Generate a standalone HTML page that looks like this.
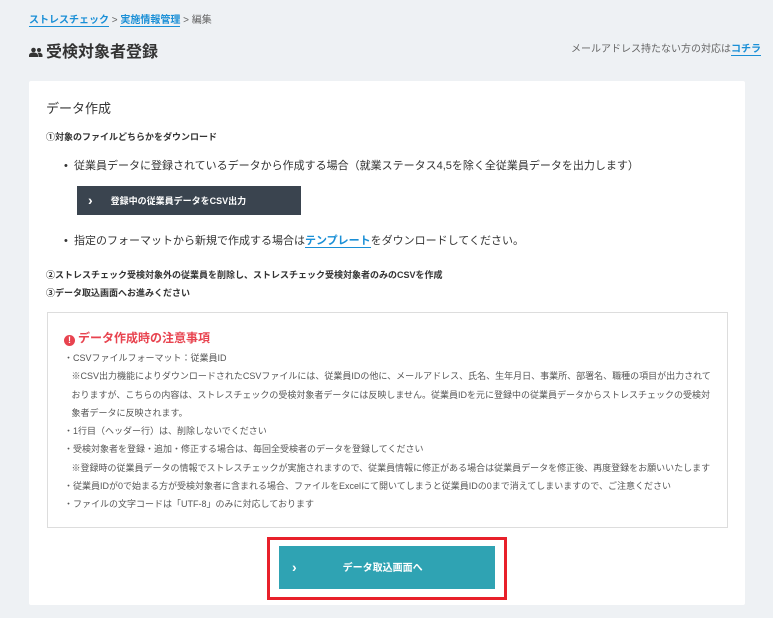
<!DOCTYPE html><html><head><meta charset="utf-8"><style>
body{margin:0;width:773px;height:618px;background:#eef1f4;font-family:"Liberation Sans","Noto Sans CJK JP",sans-serif;position:relative;overflow:hidden;color:#333}
.a{position:absolute;white-space:nowrap}
.lk{color:#1a8fd6;border-bottom:1.5px solid #1a8fd6;font-weight:bold}
.ch{font-size:14px;font-weight:bold;vertical-align:-1px}
</style></head><body>
<div class="a" style="left:29px;top:11px;font-size:10px;color:#666"><span class="lk">ストレスチェック</span> &gt; <span class="lk">実施情報管理</span> &gt; 編集</div>
<div class="a" style="left:29px;top:38px;font-size:16px;font-weight:bold;color:#333">
<svg width="14" height="10" viewBox="0 0 14 10" style="margin-right:3px"><circle cx="4.5" cy="3" r="2.3" fill="#333"/><circle cx="10" cy="3" r="2" fill="#333"/><path d="M0 10v-1.5c0-2 2-3 4.5-3s4.5 1 4.5 3V10z M9.5 10V8.5c0-1.2-.4-2-1-2.7 2.5-.5 5 .5 5 2.5V10z" fill="#333"/></svg>受検対象者登録</div>
<div class="a" style="left:571px;top:40px;font-size:10px;color:#666">メールアドレス持たない方の対応は<span class="lk">コチラ</span></div>
<div class="a" style="left:29px;top:81px;width:716px;height:524px;background:#fff;border-radius:2px"></div>
<div class="a" style="left:46px;top:98px;font-size:13px;color:#333">データ作成</div>
<div class="a" style="left:46px;top:130px;font-size:9px;font-weight:bold">①対象のファイルどちらかをダウンロード</div>
<div class="a" style="left:64px;top:157px;font-size:11px">•&nbsp;&nbsp;従業員データに登録されているデータから作成する場合（就業ステータス4,5を除く全従業員データを出力します）</div>
<div class="a" style="left:77px;top:186px;width:224px;height:29px;background:#3a444f;color:#fff;font-size:9px;font-weight:bold;line-height:29px"><span class="ch" style="margin-left:11px;margin-right:18px">›</span>登録中の従業員データをCSV出力</div>
<div class="a" style="left:64px;top:232px;font-size:11px">•&nbsp;&nbsp;指定のフォーマットから新規で作成する場合は<span class="lk" style="font-weight:bold">テンプレート</span>をダウンロードしてください。</div>
<div class="a" style="left:46px;top:266px;font-size:9px;font-weight:bold;line-height:18px">②ストレスチェック受検対象外の従業員を削除し、ストレスチェック受検対象者のみのCSVを作成<br>③データ取込画面へお進みください</div>
<div class="a" style="left:47px;top:312px;width:679px;height:214px;border:1px solid #ddd"></div>
<div class="a" style="left:64px;top:329px;font-size:12px;color:#e8434f;font-weight:bold"><span style="display:inline-block;width:11px;height:11px;border-radius:50%;background:#e8434f;color:#fff;font-size:9px;text-align:center;line-height:11px;margin-right:3px;vertical-align:-1px">!</span>データ作成時の注意事項</div>
<div class="a" style="left:64px;top:349px;font-size:9px;color:#555;line-height:18.3px">
・CSVファイルフォーマット：従業員ID<br>
&nbsp;&nbsp;&nbsp;※CSV出力機能によりダウンロードされたCSVファイルには、従業員IDの他に、メールアドレス、氏名、生年月日、事業所、部署名、職種の項目が出力されて<br>
&nbsp;&nbsp;&nbsp;おりますが、こちらの内容は、ストレスチェックの受検対象者データには反映しません。従業員IDを元に登録中の従業員データからストレスチェックの受検対<br>
&nbsp;&nbsp;&nbsp;象者データに反映されます。<br>
・1行目（ヘッダー行）は、削除しないでください<br>
・受検対象者を登録・追加・修正する場合は、毎回全受検者のデータを登録してください<br>
&nbsp;&nbsp;&nbsp;※登録時の従業員データの情報でストレスチェックが実施されますので、従業員情報に修正がある場合は従業員データを修正後、再度登録をお願いいたします<br>
・従業員IDが0で始まる方が受検対象者に含まれる場合、ファイルをExcelにて開いてしまうと従業員IDの0まで消えてしまいますので、ご注意ください<br>
・ファイルの文字コードは「UTF-8」のみに対応しております</div>
<div class="a" style="left:267px;top:537px;width:234px;height:57px;border:3px solid #e8202a"></div>
<div class="a" style="left:279px;top:546px;width:216px;height:43px;background:#2fa3b3;color:#fff;font-size:10px;font-weight:bold;line-height:43px"><span class="ch" style="margin-left:13px;margin-right:46px">›</span>データ取込画面へ</div>
</body></html>
